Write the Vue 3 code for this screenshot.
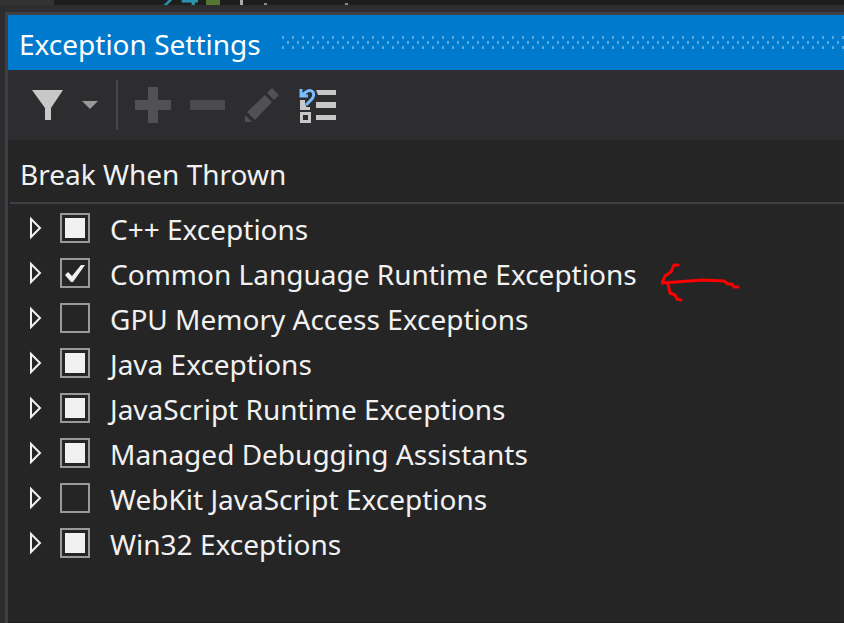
<template>
  <div class="shell">
    <div class="editor-strip">
      <span class="gutter"></span>
      <span class="line-number">24</span>
      <span class="change-mark"></span>
      <span class="caret-line"></span>
      <span class="code-dot"></span>
      <span class="code-dot wide"></span>
    </div>

    <section class="tool-window">
      <header class="title-bar">
        <h1>Exception Settings</h1>
        <svg class="grip" aria-hidden="true">
          <defs>
            <pattern id="dots" width="10" height="13" patternUnits="userSpaceOnUse">
              <rect x="1" y="0" width="2" height="3" />
              <rect x="6" y="5" width="2" height="3" />
              <rect x="1" y="10" width="2" height="3" />
            </pattern>
          </defs>
          <rect width="100%" height="13" fill="url(#dots)" />
        </svg>
      </header>

      <div class="toolbar">
        <button type="button" aria-label="Filter">
          <svg width="32" height="32" viewBox="0 0 32 32">
            <path d="M0 1H31L19 19V31H13V19Z" fill="#c8c8c8" />
          </svg>
        </button>
        <button type="button" aria-label="Filter options">
          <svg width="16" height="8" viewBox="0 0 16 8">
            <path d="M0 0H16L8 8Z" fill="#999" />
          </svg>
        </button>
        <span class="separator"></span>
        <button type="button" aria-label="Add" disabled>
          <svg width="36" height="36" viewBox="0 0 36 36">
            <path d="M12 0H22V13H35V23H22V36H12V23H-1V13H12Z" fill="#515154" />
          </svg>
        </button>
        <button type="button" aria-label="Remove" disabled>
          <svg width="36" height="36" viewBox="0 0 36 36">
            <rect x="0" y="13" width="35" height="10" fill="#4b4b4d" />
          </svg>
        </button>
        <button type="button" aria-label="Edit" disabled>
          <svg width="36" height="36" viewBox="0 0 36 36">
            <path d="M28 1L35 8L30 13L23 6ZM21 8L28 15L11 33L3 25ZM1 28L8 35H1Z" fill="#515154" />
          </svg>
        </button>
        <button type="button" aria-label="Restore defaults">
          <svg width="38" height="36" viewBox="0 0 38 36">
            <path d="M18 3H38V8H20ZM18 15H38V21H18ZM18 28H38V33H18Z" fill="#c8c8c8" />
            <path d="M2 13H7V18H8V20H12V23H2ZM2 25H13V36H2ZM5 28V33H10V28Z" fill="#c8c8c8" fill-rule="evenodd" />
            <path d="M3 2V9H10M3 9L8 5Q12 2 15 5Q17 9 13 13L8 18" fill="none" stroke="#75beff" stroke-width="3" />
          </svg>
        </button>
      </div>

      <div class="settings">
        <h2>Break When Thrown</h2>
        <ul>
          <li v-for="item in categories" :key="item.name">
            <button class="expander" type="button" :aria-label="'Expand ' + item.name">
              <svg width="14" height="24" viewBox="0 0 14 24">
                <path d="M2 3V21L11 12Z" fill="none" stroke="#f1f1f1" stroke-width="2" />
              </svg>
            </button>
            <label>
              <span class="check">
                <input
                  v-model="item.checked"
                  type="checkbox"
                  :indeterminate="item.mixed"
                  @change="item.mixed = false"
                />
                <svg v-if="item.checked" width="30" height="30" viewBox="0 0 30 30">
                  <path d="M5 17L8 14L12 18L21 7H25L13 24H11Z" fill="#f1f1f1" />
                </svg>
              </span>
              <span class="name">{{ item.name }}</span>
            </label>
            <svg v-if="item.marked" class="arrow" width="80" height="40" viewBox="0 0 80 40">
              <path
                d="M17 3L13 3L10 10L4 14L1 21L28 19L42 18L63 19L67 22L71 22L73 25L77 25M7 22L9 31L14 33L16 37L20 38"
                fill="none"
                stroke="#f00"
                stroke-width="3"
                stroke-linecap="round"
                stroke-linejoin="round"
              />
            </svg>
          </li>
        </ul>
      </div>
    </section>
  </div>
</template>

<script setup>
  import { ref } from "vue";

  const categories = ref([
    { name: "C++ Exceptions", checked: false, mixed: true },
    { name: "Common Language Runtime Exceptions", checked: true, mixed: false, marked: true },
    { name: "GPU Memory Access Exceptions", checked: false, mixed: false },
    { name: "Java Exceptions", checked: false, mixed: true },
    { name: "JavaScript Runtime Exceptions", checked: false, mixed: true },
    { name: "Managed Debugging Assistants", checked: false, mixed: true },
    { name: "WebKit JavaScript Exceptions", checked: false, mixed: false },
    { name: "Win32 Exceptions", checked: false, mixed: true },
  ]);
</script>

<style>
body {
  margin: 0;
  background: #2d2d30;
}
</style>

<style scoped>
.shell {
  display: flex;
  flex-direction: column;
  box-sizing: border-box;
  min-height: 100vh;
  overflow: hidden;
  font-family: "Noto Sans", sans-serif;
  font-size: 28px;
  color: #f1f1f1;
}

.editor-strip {
  display: flex;
  align-items: flex-end;
  height: 5px;
  margin-bottom: 7px;
  overflow: hidden;
  background: #1e1e1e;
}

.gutter {
  width: 54px;
  height: 5px;
  margin-right: 107px;
  background: #333;
}

.line-number {
  width: 45px;
  line-height: 16px;
  font-family: "DejaVu Sans Mono", monospace;
  font-size: 32px;
  color: #2b91af;
}

.change-mark {
  width: 14px;
  height: 5px;
  margin-right: 20px;
  background: #577430;
}

.caret-line {
  width: 3px;
  height: 5px;
  background: #aaa;
}

.code-dot {
  width: 3px;
  height: 2px;
  margin-left: 21px;
  background: #888;
}

.code-dot.wide {
  margin-left: 78px;
}

.tool-window {
  flex: 1;
  display: flex;
  flex-direction: column;
  margin-left: 5px;
  border-top: 3px solid #3f3f46;
  border-left: 3px solid #3f3f46;
}

.title-bar {
  display: flex;
  align-items: center;
  gap: 20px;
  height: 55px;
  padding-left: 11px;
  background: #007acc;
}

h1,
h2 {
  margin: 0;
  font-size: 28px;
  font-weight: 400;
  white-space: nowrap;
}

h1 {
  padding-top: 2px;
  line-height: 50px;
  color: #fff;
}

.grip {
  flex: 1;
  min-width: 0;
  height: 13px;
}

.grip pattern rect {
  fill: #59a9de;
}

.toolbar {
  display: flex;
  align-items: center;
  gap: 18px;
  height: 70px;
  padding-left: 24px;
}

button {
  display: flex;
  padding: 0;
  border: 0;
  background: none;
}

button svg {
  overflow: visible;
}

.separator {
  width: 2px;
  height: 50px;
  background: #464646;
}

.settings {
  flex: 1;
  border-bottom: 1px solid #1b1b1c;
  background: #252526;
}

h2 {
  height: 62px;
  margin-left: 2px;
  padding-left: 10px;
  border-bottom: 2px solid #3f3f46;
  line-height: 68px;
}

ul {
  margin: 0;
  padding: 1px 0 0;
  list-style: none;
}

li {
  display: flex;
  align-items: center;
  height: 45px;
  padding-left: 21px;
  white-space: nowrap;
}

.expander {
  width: 31px;
}

label {
  display: flex;
  align-items: center;
  gap: 20px;
}

.name {
  padding-top: 2px;
}

.check {
  display: grid;
}

.check > * {
  grid-area: 1 / 1;
}

.check svg {
  pointer-events: none;
}

input {
  appearance: none;
  width: 30px;
  height: 30px;
  margin: 0;
  border: 2px solid #999;
}

input:indeterminate {
  padding: 3px;
  background: #f1f1f1 content-box;
}

.arrow {
  margin-top: 18px;
  margin-left: 24px;
}
</style>
